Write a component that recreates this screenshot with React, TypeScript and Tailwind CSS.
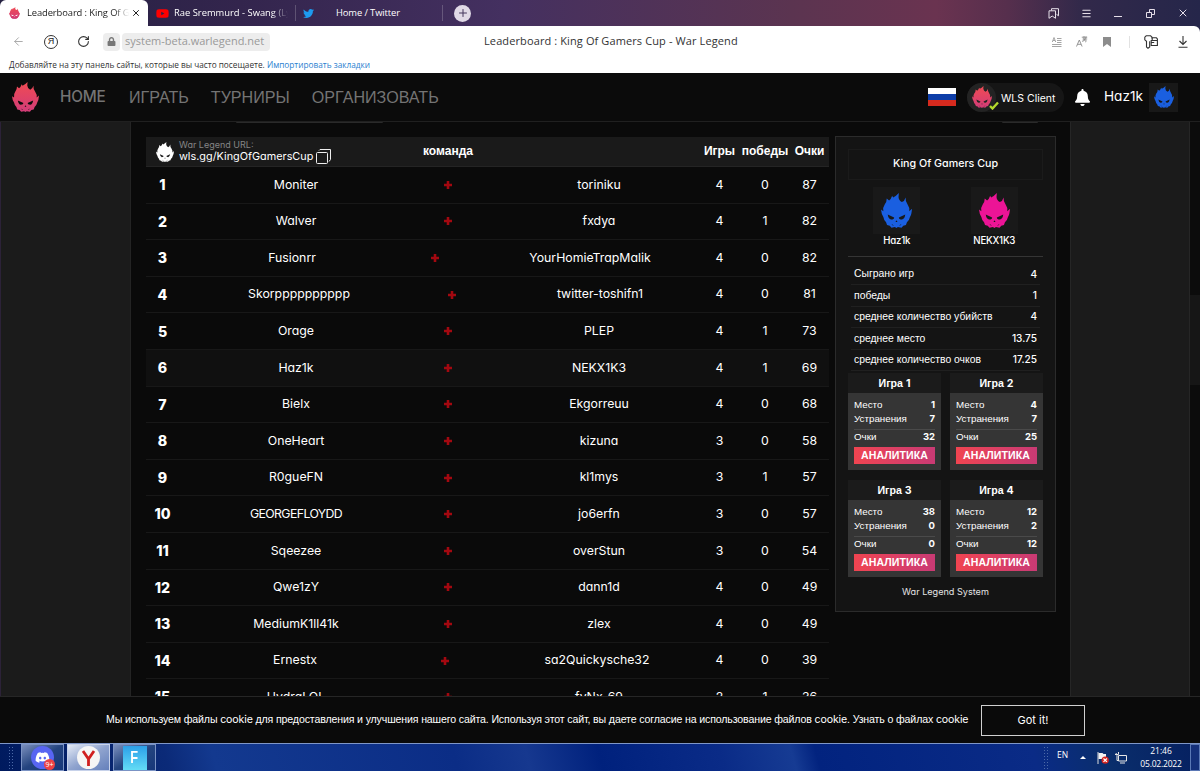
import { ArrowLeft, Menu, Plus, RotateCw, X } from 'lucide-react';
import { FaBell, FaDiscord, FaLock, FaTwitter, FaYoutube } from 'react-icons/fa';

type Row = {
  a: string;
  b: string;
  games: number;
  wins: number;
  points: number;
  cols?: string;
  active?: boolean;
};

const DEFAULT_COLS = 'grid-cols-[200px_104px_198px]';

const ROWS: Row[] = [
  { a: 'Moniter', b: 'toriniku', games: 4, wins: 0, points: 87 },
  { a: 'Walver', b: 'fxdya', games: 4, wins: 1, points: 82 },
  { a: 'Fusionrr', b: 'YourHomieTrapMalik', games: 4, wins: 0, points: 82, cols: 'grid-cols-[192px_94px_216px]' },
  { a: 'Skorpppppppppp', b: 'twitter-toshifn1', games: 4, wins: 0, points: 81, cols: 'grid-cols-[206px_100px_196px]' },
  { a: 'Orage', b: 'PLEP', games: 4, wins: 1, points: 73 },
  { a: 'Haz1k', b: 'NEKX1K3', games: 4, wins: 1, points: 69, active: true },
  { a: 'Bielx', b: 'Ekgorreuu', games: 4, wins: 0, points: 68 },
  { a: 'OneHeart', b: 'kizuna', games: 3, wins: 0, points: 58 },
  { a: 'R0gueFN', b: 'kl1mys', games: 3, wins: 1, points: 57 },
  { a: 'GEORGEFLOYDD', b: 'jo6erfn', games: 3, wins: 0, points: 57 },
  { a: 'Sqeezee', b: 'overStun', games: 3, wins: 0, points: 54 },
  { a: 'Qwe1zY', b: 'dann1d', games: 4, wins: 0, points: 49 },
  { a: 'MediumK1ll41k', b: 'zlex', games: 4, wins: 0, points: 49 },
  { a: 'Ernestx', b: 'sa2Quickysche32', games: 4, wins: 0, points: 39, cols: 'grid-cols-[198px_102px_202px]' },
  { a: 'HydraLOL', b: 'fyNx_69', games: 2, wins: 1, points: 36 },
];

const STATS = [
  { label: 'Сыграно игр', value: '4' },
  { label: 'победы', value: '1' },
  { label: 'среднее количество убийств', value: '4' },
  { label: 'среднее место', value: '13.75' },
  { label: 'среднее количество очков', value: '17.25' },
];

const GAMES = [
  { id: 1, place: 1, kills: 7, points: 32 },
  { id: 2, place: 4, kills: 7, points: 25 },
  { id: 3, place: 38, kills: 0, points: 0 },
  { id: 4, place: 12, kills: 2, points: 12 },
];

// single-storey "a" comes from Inter's cv11 alternate
const LATIN = "font-['Inter',sans-serif] [font-feature-settings:'cv11']";
const CYR = "font-['Liberation_Sans',Arial,sans-serif]";
const CHROME = "font-['Open_Sans','Noto_Sans',sans-serif]";

function Skull({ className, fill }: { className: string; fill: string }) {
  return (
    <svg className={className} viewBox="0 0 92 104" preserveAspectRatio="none" aria-hidden>
      <defs>
        <linearGradient id="skullPink" x1="0" y1="0" x2="0" y2="1">
          <stop offset="0" stopColor="#f04b53" />
          <stop offset="1" stopColor="#d23c78" />
        </linearGradient>
      </defs>
      <path
        fill={fill}
        fillRule="evenodd"
        d="M53 0L52 12Q53 23 62 27Q70 24 73 13Q72 25 79 34Q86 44 84 54L92 47Q91 64 86 71Q83 83 77 87L74 95L66 97L61 103L50 101L46 104L41 101L31 103L26 97L18 95L15 87Q9 82 7 71Q1 62 0 49L7 54Q5 42 11 34Q17 27 17 16L24 22Q30 18 33 8L36 13Q44 10 53 0ZM20 64L39 73Q39 79 30 79Q22 78 20 64ZM72 64L53 73Q53 79 62 79Q70 78 72 64ZM46 81L43 86L49 86Z"
      />
      <path d="M33 93l3 4M59 93l-3 4" stroke="#151515" strokeWidth="2" />
    </svg>
  );
}

function TabBar() {
  return (
    <div
      className={`${CHROME} flex h-[26px] shrink-0 items-stretch bg-[linear-gradient(90deg,#242041_0%,#33254d_20%,#443060_42%,#5b3450_66%,#6a3350_78%,#562f4d_84%,#32294a_90%,#25264a_100%)] text-[9.4px] text-white`}
    >
      <div className="flex w-[148px] items-center rounded-t-md bg-white pl-[9px] text-[#222]">
        <Skull className="h-[12px] w-[11px]" fill="url(#skullPink)" />
        <span className="ml-[7px] w-[102px] overflow-hidden whitespace-nowrap -tracking-[0.1px] [mask-image:linear-gradient(90deg,#000_86%,transparent)]">
          Leaderboard : King Of Gamers
        </span>
        <X className="ml-[2px] size-[10px]" strokeWidth={2.4} />
      </div>
      <div className="flex w-[147px] items-center pl-2">
        <FaYoutube className="size-[13px] text-[#f00]" />
        <span className="ml-[5px] w-[114px] overflow-hidden whitespace-nowrap [mask-image:linear-gradient(90deg,#000_86%,transparent)]">
          Rae Sremmurd - Swang (Lyrics)
        </span>
      </div>
      <div className="my-[5px] flex w-[148px] items-center border-x border-white/20 pl-[7px]">
        <FaTwitter className="size-[11px] text-[#1d9bf0]" />
        <span className="ml-[22px] -tracking-[0.1px]">Home / Twitter</span>
      </div>
      <div className="ml-[11px] flex size-[17px] items-center justify-center self-center rounded-full bg-[#e0d9e6] text-[#44365c]">
        <Plus className="size-3" strokeWidth={2} />
      </div>
      <div className="ml-auto flex items-center pr-[11px]">
        <svg className="mr-[22px] size-[11px]" viewBox="0 0 11 11" fill="none" stroke="#e6dfe9" aria-hidden>
          <path d="M3.5 2.5V.7h7v7.1l-2-1.5M1 2.8h6.5v7.5L4.2 8 1 10.3z" />
        </svg>
        <Menu className="mr-[22px] size-[11px] text-[#e6dfe9]" strokeWidth={2.2} />
        <span className="mr-[24px] mt-[7px] h-px w-2 bg-[#e6dfe9]" />
        <svg className="mr-[22px] size-[9px]" viewBox="0 0 9 9" fill="none" stroke="#e6dfe9" aria-hidden>
          <path d="M.5 3.5h5v5h-5zM3.5 3.5v-3h5v5h-3" />
        </svg>
        <X className="size-3 text-[#e6dfe9]" strokeWidth={2} />
      </div>
    </div>
  );
}

function Toolbar() {
  return (
    <div className={`${CHROME} h-[47px] shrink-0 rounded-tr-md bg-white`}>
      <div className="flex h-[31px] items-center pl-3 pr-[12px]">
        <ArrowLeft className="size-[13px] text-[#aaa]" strokeWidth={1.8} />
        <span className="ml-[19px] flex size-[14px] items-center justify-center rounded-full border border-[#333] font-['Liberation_Sans',sans-serif] text-[9px] leading-none text-[#222]">
          Я
        </span>
        <RotateCw className="ml-[19px] size-[13px] text-[#333]" strokeWidth={2} />
        <span className="ml-[13px] flex h-[18px] w-[17px] items-center justify-center rounded bg-[#ededed]">
          <FaLock className="size-[9px] text-[#777]" />
        </span>
        <span className="ml-0.5 flex h-[18px] w-[148px] items-center rounded bg-[#ededed] pl-[3px] text-[11px] text-[#999]">
          system-beta.warlegend.net
        </span>
        <span className="ml-[214px] whitespace-nowrap text-[11px] tracking-[0.11px] text-[#333]">
          Leaderboard : King Of Gamers Cup - War Legend
        </span>
        <div className="ml-auto flex items-center">
          <svg className="size-[10px]" viewBox="0 0 10 10" fill="none" stroke="#a5a5a5" aria-hidden>
            <path d="M.3 5L2 .5 3.7 5M1 3.5h2M5 1.5h4.5M5 3.5h4.5M5 5.5h4.5M0 7.5h9.5M0 9.5h9.5" />
          </svg>
          <svg className="ml-[14px] h-[11px] w-3" viewBox="0 0 12 11" fill="none" stroke="#8a8a8a" strokeWidth=".9" aria-hidden>
            <path d="M.5 10.5L3.3 4l2.8 6.5M1.5 8.3h3.6M5.8 1.2h5.4M6.6 3h4.6M8 0v5M10 .5C10 3 8 5.3 6 5.3M8 3.5c2 0 3 2 1.2 2.5" />
          </svg>
          <svg className="ml-[15px] h-[10px] w-2" viewBox="0 0 8 10" fill="#8c8c8c" aria-hidden>
            <path d="M0 0h8v10L4 7 0 10z" />
          </svg>
          <span className="ml-[18px] h-3 w-px bg-[#e2e2e2]" />
          <svg className="ml-[14px] h-[14px] w-[14px]" viewBox="0 0 14 14" fill="none" stroke="#333" strokeWidth="1.1" aria-hidden>
            <path d="M8 3.6V2.2L6.6.8H2.2L.8 2.2v2.6l1.7 1.5V12L4 13.3 5.7 12V6.2" />
            <path d="M8.2 5V2.8h4.2L13.4 4v6.5H7.2V5.5h6.2M7.2 7.5h3" />
          </svg>
          <svg className="ml-[20px] h-3 w-[10px]" viewBox="0 0 10 12" fill="none" stroke="#333" strokeWidth="1.1" aria-hidden>
            <path d="M5 0v8.5M1.5 5L5 8.5 8.5 5M.5 11.3h9" />
          </svg>
        </div>
      </div>
      <p className="whitespace-nowrap pl-[9px] text-[8.25px] leading-[16px] text-[#333]">
        Добавляйте на эту панель сайты, которые вы часто посещаете.{' '}
        <span className="text-[#2b7fd0]">Импортировать закладки</span>
      </p>
    </div>
  );
}

function SiteHeader() {
  return (
    <header className="flex h-[49px] shrink-0 items-center border-b border-[#202020] bg-[#0b0b0b] pl-3 pr-[22px] text-[16.1px] text-[#747474]">
      <Skull className="h-[30px] w-[27px]" fill="url(#skullPink)" />
      <nav className={`${CYR} ml-[21px] flex items-center gap-[22px]`}>
        <span className={`${LATIN} w-[47px] text-[15.3px] font-medium -tracking-[0.2px]`}>HOME</span>
        <span>ИГРАТЬ</span>
        <span>ТУРНИРЫ</span>
        <span>ОРГАНИЗОВАТЬ</span>
      </nav>
      <div className="ml-auto flex items-center">
        <div className="flex h-[19px] w-7 flex-col">
          <span className="flex-1 bg-white" />
          <span className="flex-1 bg-[#0d3da8]" />
          <span className="flex-1 bg-[#d62a1e]" />
        </div>
        <div className={`${LATIN} ml-[11px] flex h-[29px] w-[97px] items-center rounded-full bg-[#161616] text-[10.5px] text-white`}>
          <span className="relative flex size-[29px] items-center justify-center rounded-full bg-[#232323]">
            <Skull className="h-[22px] w-[20px]" fill="url(#skullPink)" />
            <svg className="absolute -right-[3px] bottom-[2px] h-[9px] w-[10px]" viewBox="0 0 10 9" aria-hidden>
              <path d="M1 5l2.5 2.5L9 1.5" stroke="#b4d92c" strokeWidth="2.4" fill="none" />
            </svg>
          </span>
          <span className="ml-[5px] mt-[3px] whitespace-nowrap">WLS Client</span>
        </div>
        <FaBell className="ml-[11px] h-[17px] w-[15px] text-white" />
        <span className={`${LATIN} -mt-0.5 ml-[14px] w-[38px] text-[13.6px] text-white`}>Haz1k</span>
        <span className="ml-[7px] flex size-[29px] items-center justify-center bg-[#181818]">
          <Skull className="h-[22px] w-[20px]" fill="#1a5fe0" />
        </span>
      </div>
    </header>
  );
}

function PlusMark() {
  return (
    <svg className="size-2 justify-self-center" viewBox="0 0 8 8" aria-hidden>
      <path d="M4 0v8M0 4h8" stroke="#a30810" strokeWidth="2.6" />
    </svg>
  );
}

function Leaderboard() {
  return (
    <section className="ml-[15px] mt-[15px] w-[683px] shrink-0">
      <div className={`${CYR} flex h-[30px] items-center border-b border-[#242424] bg-[#1a1a1a] text-[12px] font-bold text-white`}>
        <Skull className="ml-[10px] h-[20px] w-[18px] shrink-0" fill="#fff" />
        <div className={`${LATIN} ml-[5px] flex w-[217px] shrink-0 font-normal`}>
          <div>
            <p className="text-[9px] leading-[11px] text-[#858585]">War Legend URL:</p>
            <p className="text-[10.85px] leading-[13px]">wls.gg/KingOfGamersCup</p>
          </div>
          <svg className="ml-[3px] mt-[10px] size-[15px]" viewBox="0 0 15 15" fill="none" stroke="#eee" aria-hidden>
            <rect x=".5" y="3.5" width="11" height="11" rx="1" />
            <path d="M3 1.5l1-1h10.5v10l-1.5 2" />
          </svg>
        </div>
        <span className="mb-0.5 w-[104px] shrink-0 text-center">команда</span>
        <div className="mb-0.5 ml-[198px] grid shrink-0 grid-cols-[43px_48px_41px] justify-items-center">
          <span>Игры</span>
          <span>победы</span>
          <span>Очки</span>
        </div>
      </div>
      {ROWS.map((row, i) => (
        <div
          key={row.a}
          className={`${LATIN} flex h-[36.6px] items-center border-b border-[#181818] text-[12.3px] text-white ${
            row.active ? 'bg-[#101010]' : ''
          }`}
        >
          <span className="mr-[17px] w-[33px] shrink-0 text-center text-[14.2px] font-extrabold">{i + 1}</span>
          <div className={`grid shrink-0 items-center text-center ${row.cols ?? DEFAULT_COLS}`}>
            <span className={row.a === 'GEORGEFLOYDD' ? '-tracking-[0.6px]' : ''}>{row.a}</span>
            <PlusMark />
            <span>{row.b}</span>
          </div>
          <div className="grid shrink-0 grid-cols-[43px_48px_41px] text-center">
            <span>{row.games}</span>
            <span>{row.wins}</span>
            <span>{row.points}</span>
          </div>
        </div>
      ))}
    </section>
  );
}

function GameCard({ game }: { game: (typeof GAMES)[number] }) {
  const line = 'flex items-center justify-between';
  const num = `${LATIN} text-[9.5px] font-bold`;

  return (
    <div className={`${CYR} h-[97px] bg-[#353535] text-[9.8px] text-white`}>
      <p className="h-5 bg-[#1b1b1b] text-center text-[10.6px] font-bold leading-5">
        Игра <span className={LATIN}>{game.id}</span>
      </p>
      <div className="px-1.5 pt-[5px]">
        <div className={`${line} h-[14px]`}>
          <span>Место</span>
          <span className={num}>{game.place}</span>
        </div>
        <div className={`${line} h-[14px]`}>
          <span>Устранения</span>
          <span className={num}>{game.kills}</span>
        </div>
        <div className={`${line} mt-[3px] h-[15px] border-t border-[#4a4a4a]`}>
          <span>Очки</span>
          <span className={num}>{game.points}</span>
        </div>
        <button
          type="button"
          className="mt-[3px] block h-[17px] w-full bg-linear-to-r from-[#f04450] to-[#c93a74] text-center text-[10.6px] font-bold leading-[17px] tracking-[0.1px]"
        >
          АНАЛИТИКА
        </button>
      </div>
    </div>
  );
}

function TeamPanel() {
  return (
    <aside className={`${LATIN} ml-[6px] mt-[14px] h-[476px] w-[221px] shrink-0 border border-[#2b2b2b] bg-[#141414] px-3 pt-3 text-white`}>
      <h2 className="flex h-[31px] items-center justify-center border border-[#1b1b1b] text-[10.7px] font-medium">
        King Of Gamers Cup
      </h2>
      <div className="mt-[7px] grid grid-cols-2 justify-items-center text-[9.7px] font-medium">
        {[
          { name: 'Haz1k', color: '#1a5fe0' },
          { name: 'NEKX1K3', color: '#ec1496' },
        ].map((p) => (
          <div key={p.name} className="flex flex-col items-center">
            <span className="flex size-[47px] items-center justify-center bg-[#191919]">
              <Skull className="h-[35px] w-[31px]" fill={p.color} />
            </span>
            <span className="-mt-px mb-px leading-4 -tracking-[0.2px]">{p.name}</span>
          </div>
        ))}
      </div>
      <div className="mt-[6px] border-t border-[#353535] px-[3px] pt-[7px]">
        {STATS.map((s) => (
          <div key={s.label} className="flex h-[21.4px] items-center justify-between border-b border-[#202020] px-[3px] text-[10.4px]">
            <span className={CYR}>{s.label}</span>
            <span className="text-[10.1px] font-medium">{s.value}</span>
          </div>
        ))}
      </div>
      <div className="mt-[2px] grid grid-cols-2 gap-x-[9px] gap-y-[10px]">
        {GAMES.map((g) => (
          <GameCard key={g.id} game={g} />
        ))}
      </div>
      <p className="mt-[7px] text-center text-[9.1px] leading-4 text-[#e4e4e4]">War Legend System</p>
    </aside>
  );
}

function CookieBar() {
  const c = <span className={LATIN}>cookie</span>;

  return (
    <div className={`${CYR} flex h-[47px] shrink-0 items-center border-t border-[#262626] bg-[#0a0a0a] pl-[106px] text-[10.6px] -tracking-[0.14px] text-white`}>
      <p className="w-[861px] shrink-0 whitespace-nowrap">
        Мы используем файлы {c} для предоставления и улучшения нашего сайта. Используя этот сайт, вы даете согласие на
        использование файлов {c}. Узнать о файлах {c}
      </p>
      <button type="button" className={`${LATIN} ml-[14px] h-[31px] w-[104px] border border-[#d0d0d0] text-[11px] tracking-normal`}>
        Got it!
      </button>
    </div>
  );
}

function Taskbar() {
  const btn =
    'flex h-[27px] w-[43px] items-center justify-center border border-[#7b93c4] bg-linear-to-br from-[#7b8fbd] via-[#24447f] to-[#17377a]';

  return (
    <div
      className={`${CHROME} flex h-7 shrink-0 items-center border-t border-[#7f97c8] bg-[linear-gradient(75deg,#001a5e_0%,#0b2a78_14%,#13398f_18%,#0b2d86_38%,#16388f_44%,#00217d_50%,#0a2b87_60%,#163b93_66%,#02237f_68%,#0a2b86_86%,#0a2e6c_92%,#062060_100%)] text-[8.5px] text-white`}
    >
      <span className="ml-2 h-[23px] w-[6px] bg-[radial-gradient(#4d6aa8_0.6px,transparent_0.8px)] bg-size-[3px_3px]" />
      <div className="ml-[7px] flex gap-[3px]">
        <div className={btn}>
          <span className="relative flex size-[23px] items-center justify-center rounded-full bg-[#5865f2]">
            <FaDiscord className="size-[15px]" />
            <span className="absolute -bottom-px -right-px flex size-[11px] items-center justify-center rounded-full bg-[#ed4245] text-[7px] leading-none">
              9+
            </span>
          </span>
        </div>
        <div className="flex h-[27px] w-[43px] items-center justify-center border border-[#c7d2ea] bg-linear-to-br from-[#e4eaf5] via-[#8fa3ce] to-[#6580bb]">
          <svg className="size-[23px]" viewBox="0 0 23 23" aria-hidden>
            <circle cx="11.5" cy="11.5" r="11.5" fill="#f5f5f5" />
            <path d="M6 5l5.5 8L17 5M11.5 12v8" stroke="#d01f1f" strokeWidth="2.8" fill="none" />
          </svg>
        </div>
        <div className={btn}>
          <span className="flex size-6 items-center justify-center bg-linear-to-b from-[#2b9fe8] to-[#63dcf5] font-['Liberation_Sans',sans-serif] text-[17px] font-bold leading-none">
            <span className="scale-x-75">F</span>
          </span>
        </div>
      </div>
      <span className="ml-auto h-[23px] w-[6px] bg-[radial-gradient(#4d6aa8_0.6px,transparent_0.8px)] bg-size-[3px_3px]" />
      <span className="ml-[8px] w-[13px] -translate-y-0.5">EN</span>
      <svg className="ml-[10px] h-[3px] w-[6px]" viewBox="0 0 6 3" fill="#fff" aria-hidden>
        <path d="M0 3L3 0l3 3z" />
      </svg>
      <svg className="ml-[11px] size-3" viewBox="0 0 12 12" aria-hidden>
        <path d="M1 0v12" stroke="#ddd" />
        <path d="M1.5 1h4l1 1H9v5H1.5z" fill="#f2f2f2" />
        <circle cx="8.2" cy="8.2" r="3.6" fill="#d6251f" />
        <path d="M6.5 6.5l3.4 3.4M9.9 6.5L6.5 9.9" stroke="#fff" strokeWidth="1.2" />
      </svg>
      <svg className="ml-[6px] size-3" viewBox="0 0 12 12" fill="none" stroke="#e6e6e6" aria-hidden>
        <path d="M3.5 3.5h8v5.5h-8zM5 11h5M1 1l1 2.5v5h1.5M0 2.5h3.5V0" />
      </svg>
      <div className="ml-[12px] w-11 text-center leading-[12.5px]">
        <p>21:46</p>
        <p className="-mx-1 -tracking-[0.2px]">05.02.2022</p>
      </div>
      <span className="ml-[7px] h-full w-[10px] border border-[#5b78b5] bg-[#15307a]" />
    </div>
  );
}

export default function App() {
  return (
    <div className="flex h-[771px] w-[1200px] flex-col overflow-hidden bg-[#0a0a0a]">
      <TabBar />
      <div className="shrink-0 bg-[#25264a]">
        <Toolbar />
      </div>
      <SiteHeader />
      <main className="flex min-h-0 flex-1 overflow-hidden">
        <div className="w-[131px] shrink-0 border-l border-r border-[#2c2238] border-r-[#242424] bg-[#1b1b1b]" />
        <div className="relative flex w-[939px] shrink-0 bg-[#0a0a0a]">
          <span className="absolute left-[105px] top-0 h-px w-[147px] rounded-b bg-[#2a2a2a]" />
          <span className="absolute left-[871px] top-0 h-px w-[36px] rounded-b bg-[#2a2a2a]" />
          <Leaderboard />
          <TeamPanel />
        </div>
        <div className="w-[120px] shrink-0 border-x border-[#262626] bg-[#1b1b1b]" />
        <div className="flex-1 bg-[#0c0c0c] pt-[173px]">
          <div className="h-[90px] bg-[#161616]" />
        </div>
      </main>
      <CookieBar />
      <Taskbar />
    </div>
  );
}
